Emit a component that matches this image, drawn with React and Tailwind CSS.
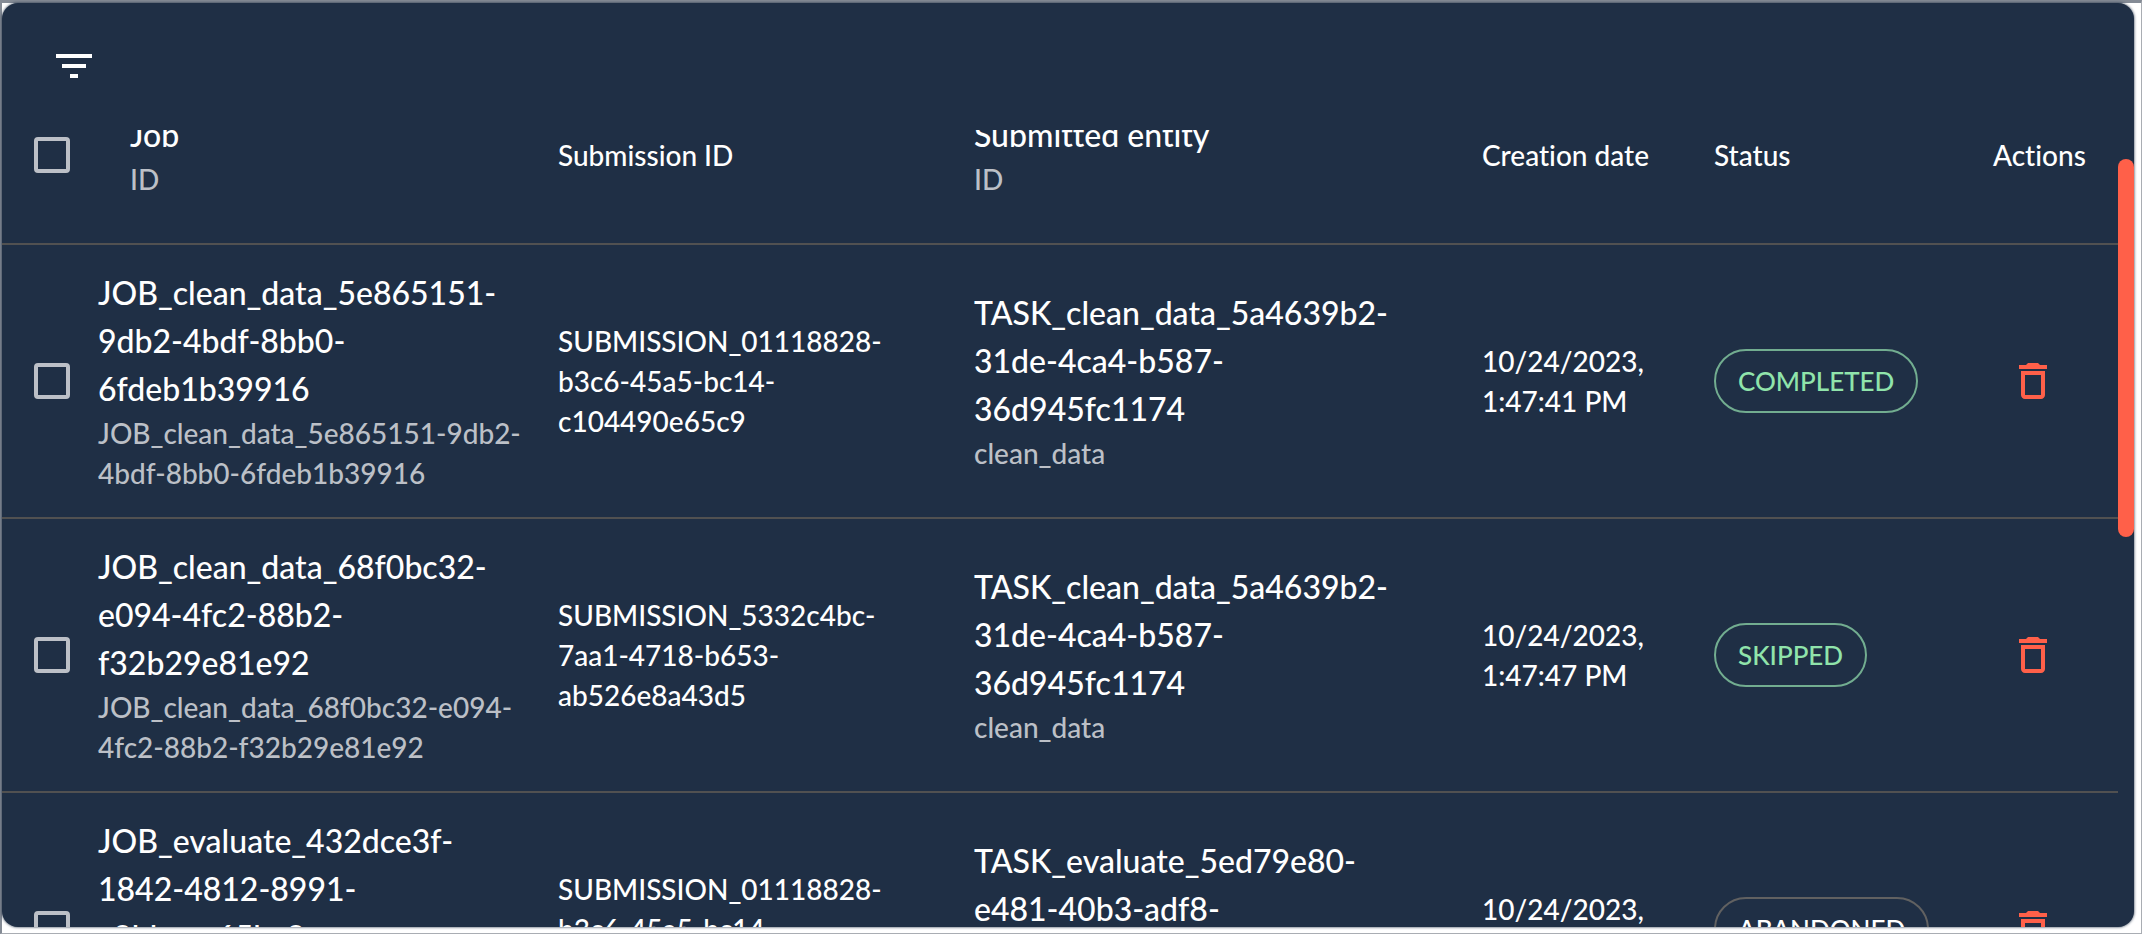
const jobs = [
  {
    id: "JOB_clean_data_5e865151-9db2-4bdf-8bb0-6fdeb1b39916",
    submission: "SUBMISSION_01118828-b3c6-45a5-bc14-c104490e65c9",
    entity: "TASK_clean_data_5a4639b2-31de-4ca4-b587-36d945fc1174",
    entityId: "clean_data",
    date: "10/24/2023, 1:47:41 PM",
    status: "COMPLETED",
    done: true,
  },
  {
    id: "JOB_clean_data_68f0bc32-e094-4fc2-88b2-f32b29e81e92",
    submission: "SUBMISSION_5332c4bc-7aa1-4718-b653-ab526e8a43d5",
    entity: "TASK_clean_data_5a4639b2-31de-4ca4-b587-36d945fc1174",
    entityId: "clean_data",
    date: "10/24/2023, 1:47:47 PM",
    status: "SKIPPED",
    done: true,
  },
  {
    id: "JOB_evaluate_432dce3f-1842-4812-8991-c8bbaec65bc8",
    submission: "SUBMISSION_01118828-b3c6-45a5-bc14-c104490e65c9",
    entity: "TASK_evaluate_5ed79e80-e481-40b3-adf8-5d8a2b0c7e16",
    entityId: "evaluate",
    date: "10/24/2023, 1:47:41 PM",
    status: "ABANDONED",
    done: false,
  },
];

function Tick({ label }) {
  return (
    <input
      type="checkbox"
      aria-label={label}
      className="block size-9 appearance-none rounded border-4 border-[#bcc0c7] checked:bg-[#ff6049]"
    />
  );
}

function FilterIcon() {
  return (
    <svg viewBox="0 0 24 24" className="size-12 fill-current" aria-hidden="true">
      <path d="M10 18h4v-2h-4v2zM3 6v2h18V6H3zm3 7h12v-2H6v2z" />
    </svg>
  );
}

function TrashIcon() {
  return (
    <svg viewBox="0 0 24 24" className="size-12 fill-current" aria-hidden="true">
      <path d="M6 19c0 1.1.9 2 2 2h8c1.1 0 2-.9 2-2V7H6v12zM8 9h8v10H8V9zm7.5-5l-1-1h-5l-1 1H5v2h14V4z" />
    </svg>
  );
}

function Row({ job }) {
  const tone = job.done
    ? "border-[#72ad90] text-[#90e4ab]"
    : "border-[#616161] text-white";
  return (
    <tr className="border-b-2 border-[#515151]">
      <td className="py-6 pl-8">
        <Tick label={`Select ${job.id}`} />
      </td>
      <td className="py-6">
        <p className="text-[32px] leading-[48px]">{job.id}</p>
        <p className="text-[#bcc0c7]">{job.id}</p>
      </td>
      <td className="px-8 py-6">{job.submission}</td>
      <td className="px-8 py-6">
        <p className="text-[32px] leading-[48px]">{job.entity}</p>
        <p className="text-[#bcc0c7]">{job.entityId}</p>
      </td>
      <td className="px-8 py-6">{job.date}</td>
      <td className="px-8 py-6">
        <span className={`inline-flex h-16 items-center rounded-full border-2 px-[22px] align-middle text-[26px] ${tone}`}>
          {job.status}
        </span>
      </td>
      <td className="py-6 pl-12">
        <button type="button" aria-label={`Delete ${job.id}`} className="block text-[#ff6049]">
          <TrashIcon />
        </button>
      </td>
    </tr>
  );
}

export default function App() {
  return (
    <div className="h-screen border-t-[3px] border-r border-b border-l-2 border-t-[#848b95] border-r-[#a9adb3] border-b-[#a9adb3] border-l-[#848b95] bg-white pr-[7px] pb-1.5 font-['Lato',sans-serif] font-medium [font-variant-ligatures:none]">
      <main className="flex h-full flex-col overflow-hidden rounded-2xl bg-[#1f2f45] text-[28px] leading-10 text-white shadow-[0_0_3px_#1f2f45]">
        <div className="flex h-[127px] shrink-0 items-start pt-[39px] pl-12">
          <button type="button" aria-label="Show filters">
            <FilterIcon />
          </button>
        </div>
        <div className="flex min-h-0 flex-1">
          <div className="min-w-0 flex-1 overflow-hidden">
            <table className="-mt-16 w-full table-fixed border-collapse text-left">
              <colgroup>
                <col className="w-[96px]" />
                <col className="w-[428px]" />
                <col className="w-[416px]" />
                <col className="w-[508px]" />
                <col className="w-[232px]" />
                <col className="w-[279px]" />
                <col className="w-[157px]" />
              </colgroup>
              <thead>
                <tr className="h-[178px] border-b-2 border-[#515151]">
                  <th className="pl-8">
                    <Tick label="Select all jobs" />
                  </th>
                  <th className="px-8 font-medium">
                    <p className="text-[32px] leading-[48px]">Job</p>
                    <p className="text-[#bcc0c7]">ID</p>
                  </th>
                  <th className="px-8 font-medium">Submission ID</th>
                  <th className="px-8 font-medium">
                    <p className="text-[32px] leading-[48px]">Submitted entity</p>
                    <p className="text-[#bcc0c7]">ID</p>
                  </th>
                  <th className="px-8 font-medium">Creation date</th>
                  <th className="px-8 font-medium">Status</th>
                  <th className="px-8 font-medium">Actions</th>
                </tr>
              </thead>
              <tbody>
                {jobs.map((job) => (
                  <Row key={job.id} job={job} />
                ))}
              </tbody>
            </table>
          </div>
          <div className="w-4 shrink-0 pt-[29px]">
            <div className="h-[378px] rounded-full bg-[#ff6049]" />
          </div>
        </div>
      </main>
    </div>
  );
}
